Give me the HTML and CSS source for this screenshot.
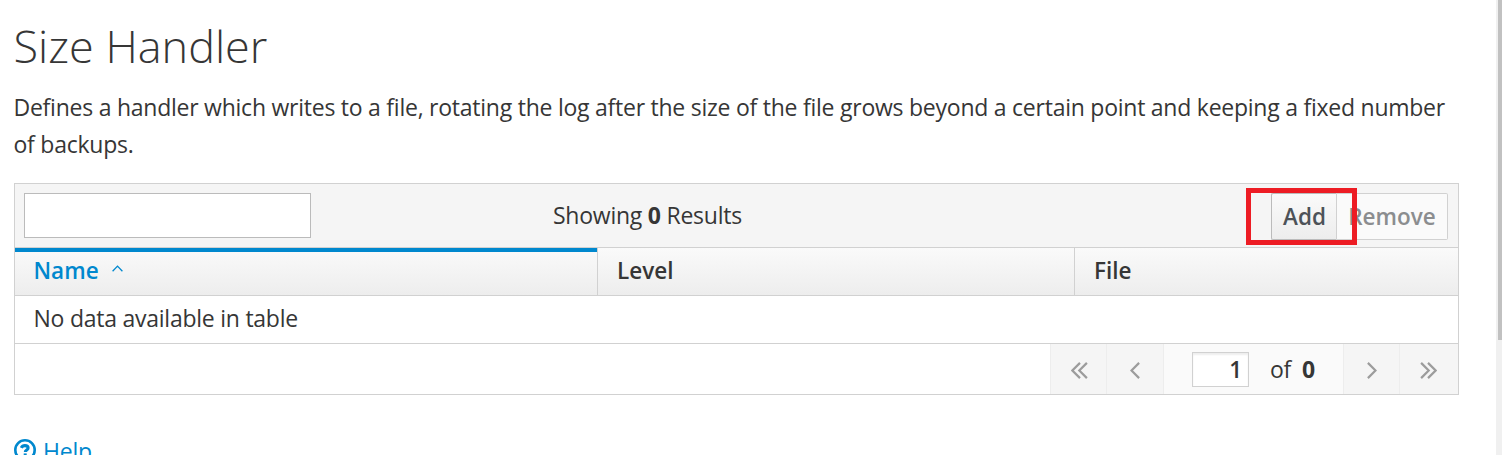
FILE: index.html
```html
<!DOCTYPE html>
<html lang="en">
<head>
<meta charset="utf-8">
<title>Size Handler</title>
<link rel="stylesheet" href="styles.css">
</head>
<body>
<div class="page">
  <main class="content">
    <h1 class="title">Size Handler</h1>
    <p class="description">Defines a handler which writes to a file, rotating the log after the size of the file grows beyond a certain point and keeping a fixed number<br>of backups.</p>
    <section class="table-view">
      <div class="toolbar">
        <div class="filter"><input class="filter-input" type="text" aria-label="Filter"></div>
        <div class="results">Showing <b>0</b> Results</div>
        <div class="actions">
          <button class="btn btn-add">Add</button><button class="btn btn-remove" disabled>Remove</button>
          <span class="highlight"></span>
        </div>
      </div>
      <div class="head">
        <div class="th th-sorted">Name<svg class="sort-icon" width="11" height="7" viewBox="0 0 11 7"><path d="M.6 6.3 5.5 1.1l4.9 5.2" fill="none" stroke="currentColor" stroke-width="1.3"/></svg></div>
        <div class="th">Level</div>
        <div class="th">File</div>
      </div>
      <div class="row">No data available in table</div>
      <div class="footer">
        <div class="page-btn first"><svg width="17" height="17" viewBox="0 0 17 17"><path d="M9 .9 1.4 8.5 9 16.1M15.9.9 8.3 8.5l7.6 7.6"/></svg></div>
        <div class="page-btn prev"><svg width="10" height="17" viewBox="0 0 10 17"><path d="M9.1.9 1.5 8.5l7.6 7.6"/></svg></div>
        <div class="pages">
          <input class="page-input" type="text" value="1" aria-label="Page">
          <span class="of">of</span><b class="total">0</b>
        </div>
        <div class="page-btn next"><svg width="10" height="17" viewBox="0 0 10 17"><path d="M.9.9l7.6 7.6-7.6 7.6"/></svg></div>
        <div class="page-btn last"><svg width="17" height="17" viewBox="0 0 17 17"><path d="M1.1.9l7.6 7.6-7.6 7.6M8 .9l7.6 7.6L8 16.1"/></svg></div>
      </div>
    </section>
    <a class="help"><svg class="help-icon" width="22" height="22" viewBox="0 0 22 22" fill="none" stroke="currentColor"><circle cx="11" cy="11" r="9.7" stroke-width="2.6"/><path d="M7.3 8.9C8.1 7.2 9.3 6.6 10.9 6.6c1.9 0 3.2.9 3.2 2.3 0 2-2.8 2-2.8 4" stroke-width="3.1"/><path d="M11.2 14.4v2.9" stroke-width="3"/></svg><span>Help</span></a>
  </main>
  <div class="scrollbar"><div class="thumb"></div></div>
</div>
</body>
</html>
```
FILE: styles.css
```css
* { box-sizing: border-box; }
body {
  margin: 0;
  background: #fff;
  color: #363636;
  font: 400 23px/38px "Open Sans", "Noto Sans", sans-serif;
  letter-spacing: -0.245px;
  overflow: hidden;
}
.page {
  display: flex;
  justify-content: space-between;
  height: 455px;
  overflow: hidden;
}
.content { width: 1459px; padding: 16px 0 0 14px; }
.title {
  margin: 0 0 0 -0.5px;
  font-size: 45px;
  font-weight: 300;
  line-height: 60px;
  letter-spacing: 0;
}
.description { margin: 13px 0 0 -0.5px; line-height: 37px; white-space: nowrap; }
.table-view {
  margin-top: 20px;
  border: 1px solid #d1d1d1;
}
.toolbar {
  display: flex;
  height: 64px;
  padding: 9px 10px 0 9px;
  background: #f5f5f5;
  border-bottom: 1px solid #d1d1d1;
}
.filter { width: 529px; }
.filter-input {
  display: block;
  width: 287px;
  height: 45px;
  padding: 0 10px;
  border: 1px solid #bbb;
  background: #fff;
}
.results { line-height: 45px; flex: 1; white-space: nowrap; }
.actions { position: relative; display: flex; }
.btn {
  height: 47px;
  margin: 0;
  padding: 0 11px;
  border: 1px solid #d1d1d1;
  font: 600 22.5px/43px "Open Sans", sans-serif;
  letter-spacing: 0;
  white-space: nowrap;
}
.btn-add {
  width: 66px;
  border-color: #bbb #d1d1d1 #bbb #bbb;
  border-radius: 2px 0 0 2px;
  background: linear-gradient(#fafafa, #ededed);
  color: #4d5258;
}
.btn-remove {
  width: 111px;
  border-left: 0;
  border-radius: 0 2px 2px 0;
  background: #fafafa;
  color: #8b8d8f;
}
.highlight {
  position: absolute;
  top: -5px;
  left: -25px;
  width: 111px;
  height: 57px;
  border: 5px solid #ed1c24;
}
.head {
  display: grid;
  grid-template-columns: 583px 477px 1fr;
  height: 48px;
  background: linear-gradient(#fafafa, #ededed);
  border-bottom: 1px solid #d1d1d1;
}
.th {
  padding: 4px 0 0 19px;
  border-right: 1px solid #d1d1d1;
  font-size: 22.5px;
  font-weight: 600;
  line-height: 37px;
  letter-spacing: 0;
}
.th:last-child { border-right: 0; }
.th-sorted {
  display: flex;
  padding-left: 18.5px;
  box-shadow: inset 0 4px #0088ce;
  color: #0088ce;
}
.sort-icon { margin: 13px 0 0 13.5px; }
.row {
  height: 48px;
  padding-left: 18.5px;
  border-bottom: 1px solid #d1d1d1;
  line-height: 45px;
}
.footer {
  display: flex;
  justify-content: flex-end;
  height: 50px;
}
.page-btn {
  display: flex;
  align-items: center;
  justify-content: center;
  width: 56px;
  padding-top: 3px;
  background: #f5f5f5;
  border-left: 1px solid #ededed;
}
.page-btn path { fill: none; stroke: #9c9c9c; stroke-width: 2.2; }
.first { padding-left: 2px; }
.last { width: 59px; padding-right: 2px; }
.prev { width: 58px; border-right: 1px solid #ededed; }
.pages {
  display: flex;
  width: 179px;
  padding-left: 28px;
  background: #fafafa;
  line-height: 51px;
}
.page-input {
  width: 57px;
  height: 35px;
  margin-top: 8px;
  padding: 0 6px;
  border: 1px solid #d1d1d1;
  box-shadow: inset 0 2px 2px #eee;
  background: #fff;
  color: #363636;
  font: 600 22.5px/33px "Open Sans", sans-serif;
  text-align: right;
}
.of { margin-left: 21px; }
.total { margin-left: 11px; }
.help {
  display: flex;
  margin-top: 37px;
  color: #0088ce;
}
.help-icon { margin: 7px 7px 0 0; }
.scrollbar { width: 6px; padding-left: 2px; background: #f0f0f0; }
.thumb { height: 340px; background: #c1c1c1; }
```
